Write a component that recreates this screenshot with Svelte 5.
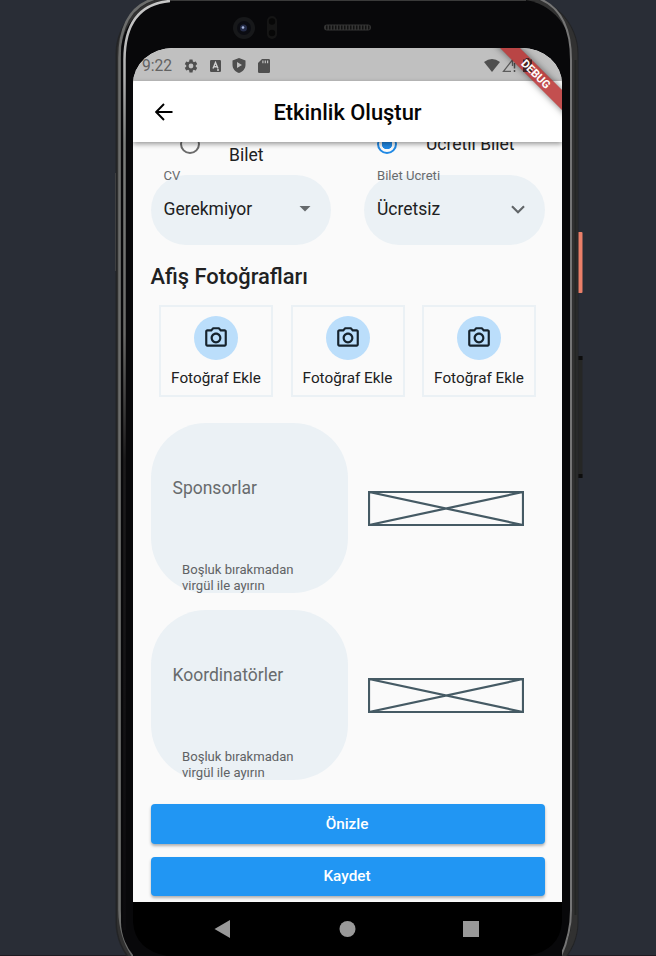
<script>
  const photos = [1, 2, 3];
  const groups = ['Sponsorlar', 'Koordinatörler'];
</script>

<div class="desktop">
  <svg class="device" width="656" height="956" viewBox="0 0 656 956" aria-hidden="true">
    <defs>
      <linearGradient id="sheen" gradientUnits="userSpaceOnUse" x1="0" y1="0" x2="0" y2="956">
        <stop offset="0" stop-color="#c8c8c8" />
        <stop offset="0.080" stop-color="#b0b0b0" />
        <stop offset="0.150" stop-color="#7c7e7c" />
        <stop offset="0.350" stop-color="#6a6a68" />
        <stop offset="0.480" stop-color="#1c1b1c" />
        <stop offset="1" stop-color="#0b0a0d" />
      </linearGradient>
    </defs>
    <rect x="0" y="955" width="656" height="1" fill="#1e1a21" />
    <rect x="577.500" y="232" width="5" height="61" rx="1" fill="#ea7f69" />
    <rect x="578" y="356" width="4.500" height="122" rx="1" fill="#262726" />
    <rect x="578" y="356" width="4.500" height="4" fill="#0d0d0d" />
    <rect x="578" y="474" width="4.500" height="4" fill="#0d0d0d" />
    <rect x="115" y="173" width="2" height="98" fill="#5a5b5c" />
    <rect x="115.500" y="-4" width="463" height="984" rx="58" fill="#232426" />
    <rect x="117" y="-3" width="460.500" height="982" rx="57" fill="#313131" />
    <path d="M162 -3Q119.500 4 119.500 58V910Q120 940 136 960" fill="none" stroke="#6c6d6c" stroke-width="2.500" />
    <rect x="121" y="-0.500" width="450" height="975" rx="53" fill="#08080a" />
    <path d="M170 1Q124.500 5 124.500 60V930" fill="none" stroke="url(#sheen)" stroke-width="2.500" />
    <path d="M170 0.500H526" stroke="#3a3a3a" stroke-width="1" />
    <path d="M540 -1Q571 12 571 60V910Q571 935 560 958" fill="none" stroke="#757575" stroke-width="2" />
    <path d="M575.500 60V915" stroke="#242625" stroke-width="2" />
    <circle cx="244" cy="28" r="11" fill="#17181a" />
    <circle cx="244" cy="28" r="7" fill="#0b0c12" />
    <circle cx="243.500" cy="28" r="3.500" fill="#252c48" />
    <circle cx="243" cy="27.500" r="1.300" fill="#a9b7de" />
    <rect x="267" y="16" width="10" height="23" rx="5" fill="#151515" />
    <circle cx="272" cy="21.500" r="3.200" fill="#070707" />
    <circle cx="272" cy="33" r="3.200" fill="#070707" />
    <path d="M327 27.500H368" stroke="#343434" stroke-width="6" stroke-linecap="round" />
    <path d="M326 27.500H370" stroke="#111" stroke-width="4" stroke-dasharray="1.500 1.500" />
  </svg>

  <main class="screen">
    <header class="status">
      <span class="clock">9:22</span>
      <svg class="s1" width="16" height="16" viewBox="0 0 24 24"><path fill="#4f4f4f" d="M19.140 12.940c.04-.3.060-.61.060-.94s-.02-.64-.07-.94l2.030-1.580a.49.490 0 0 0 .12-.61l-1.920-3.320a.49.490 0 0 0-.59-.22l-2.390.96a7 7 0 0 0-1.620-.94l-.36-2.540A.48.480 0 0 0 13.920 2.400h-3.840a.47.470 0 0 0-.47.410l-.36 2.540c-.59.240-1.130.57-1.620.94l-2.390-.96a.47.470 0 0 0-.59.220L2.740 8.870a.47.470 0 0 0 .12.610l2.030 1.580c-.05.300-.09.630-.09.940s.02.640.07.940l-2.030 1.580a.49.490 0 0 0-.12.610l1.920 3.320c.12.220.37.290.59.220l2.390-.96c.5.380 1.030.7 1.620.94l.36 2.540c.05.240.24.410.48.410h3.840c.24 0 .44-.17.470-.41l.36-2.540a7 7 0 0 0 1.620-.94l2.390.96c.22.080.47 0 .59-.22l1.920-3.320a.47.470 0 0 0-.12-.61zM12 15.600a3.600 3.600 0 1 1 0-7.200 3.600 3.600 0 0 1 0 7.200z" /></svg>
      <svg class="s2" width="11" height="12" viewBox="0 0 11 12"><rect width="11" height="12" rx="1.200" fill="#4f4f4f" /><path d="M3 8.500L5.500 2.500L8 8.500M4 6.700H7M7 10H9" fill="none" stroke="#d0d0d0" stroke-width="1.400" /></svg>
      <svg class="s3" width="14" height="15" viewBox="0 0 14 15"><path fill="#4f4f4f" fill-rule="evenodd" d="M7 0L13.500 2.500V7C13.500 10.700 10.700 13.800 7 15C3.300 13.800 0.500 10.700 0.500 7V2.500ZM5 4V10L10 7Z" /></svg>
      <svg class="s4" width="12" height="14" viewBox="0 0 12 14"><path fill="#4f4f4f" fill-rule="evenodd" d="M4 0H10.700Q12 0 12 1.300V12.700Q12 14 10.700 14H1.300Q0 14 0 12.700V4ZM4.300 1.500V4.300H5.500V1.500ZM6.700 1.500V4.300H7.900V1.500ZM9 1.500V4.300H10.200V1.500Z" /></svg>
      <span class="grow"></span>
      <svg class="s5" width="32" height="16" viewBox="0 0 32 16">
        <path fill="#4f4f4f" d="M0 4Q8 -2 16 4L8 14Z" />
        <path fill="none" stroke="#5c5c5c" stroke-width="1.300" d="M28.500 1.800L19.500 13.300H27M28.500 1.800V8" />
        <path stroke="#4f4f4f" stroke-width="1.500" d="M30.500 5V10.500M30.500 12V14" />
      </svg>
    </header>

    <div class="ribbon">
      <i class="band"></i>
      <svg class="battery" width="9" height="14" viewBox="0 0 9 14"><path fill="#2b1718" fill-opacity=".8" d="M0 1.500H2.700V0H6.300V1.500H9V14H0Z" /></svg>
      <span class="band label">DEBUG</span>
    </div>

    <div class="appbar">
      <svg width="18" height="18" viewBox="0 0 18 18"><path d="M17.500 9H1.500M9 1L1.200 9L9 17" fill="none" stroke="#000" stroke-width="1.900" /></svg>
      <h1>Etkinlik Oluştur</h1>
    </div>

    <section class="body">
      <div class="radios">
        <div class="option first"><i class="radio"></i><span>Bilet</span></div>
        <div class="option second"><i class="radio on"></i><span>Ücretli Bilet</span></div>
      </div>

      <div class="fields">
        <div class="field">
          <small>CV</small>
          <div><span>Gerekmiyor</span><svg width="12" height="6" viewBox="0 0 12 6"><path d="M0.500 0H11.500L6 5.500Z" fill="#666a6d" /></svg></div>
        </div>
        <div class="field">
          <small>Bilet Ucreti</small>
          <div><span>Ücretsiz</span><svg width="14" height="9" viewBox="0 0 14 9"><path d="M1 1.200L7 7.200L13 1.200" fill="none" stroke="#63676a" stroke-width="2.200" /></svg></div>
        </div>
      </div>

      <h2>Afiş Fotoğrafları</h2>

      <div class="photos">
        {#each photos as photo (photo)}
          <div class="photo">
            <div class="disc">
              <svg width="26" height="26" viewBox="0 0 24 24"><path fill="#16232d" d="M14.120 4l1.830 2H20v12H4V6h4.050l1.830-2h4.240M15 2H9L7.170 4H4c-1.100 0-2 .9-2 2v12c0 1.100.9 2 2 2h16c1.100 0 2-.9 2-2V6c0-1.100-.9-2-2-2h-3.170L15 2zm-3 7c1.650 0 3 1.350 3 3s-1.350 3-3 3-3-1.350-3-3 1.350-3 3-3m0-2c-2.760 0-5 2.240-5 5s2.240 5 5 5 5-2.240 5-5-2.240-5-5-5z" /></svg>
            </div>
            <span>Fotoğraf Ekle</span>
          </div>
        {/each}
      </div>

      {#each groups as group (group)}
        <div class="group">
          <div class="area">
            <span>{group}</span>
            <p>Boşluk bırakmadan<br />virgül ile ayırın</p>
          </div>
          <svg class="placeholder" width="156" height="35" viewBox="0 0 156 35"><path d="M1 1H155V34H1ZM1 1L155 34M1 34L155 1" fill="none" stroke="#455a64" stroke-width="2.200" /></svg>
        </div>
      {/each}

      <button>Önizle</button>
      <button>Kaydet</button>
    </section>

    <nav>
      <svg width="429" height="54" viewBox="0 0 429 54">
        <path d="M0 20Q2 48 34 54H0ZM429 20Q427 48 395 54H429Z" fill="#08080a" />
        <path d="M81.500 27L97 18V36Z" fill="#999" />
        <circle cx="214.500" cy="27" r="8" fill="#999" />
        <rect x="330" y="19" width="16" height="16" fill="#999" />
      </svg>
    </nav>
  </main>
</div>

<style>
  :global(body) { background: #292d36; }
  .desktop {
    position: relative; box-sizing: border-box; width: 656px; height: 956px; padding: 48px 94px 0 133px;
    overflow: hidden; background: #292d36; font-family: Roboto, "Liberation Sans", sans-serif; color: #202122;
  }
  .device { position: absolute; left: 0; top: 0; }
  .screen { position: relative; width: 429px; height: 908px; overflow: hidden; border-radius: 40px 40px 0 0 / 36px 36px 0 0; background: #fafafa; display: flex; flex-direction: column; }
  .status { box-sizing: border-box; height: 33px; flex: none; display: flex; align-items: center; padding: 2px 0 0 9px; background: #c0c0c0; }
  .clock { width: 41px; font-size: 15.600px; font-weight: 400; color: #626262; }
  .s2 { margin-left: 11px; }
  .s3 { margin-left: 11px; }
  .s4 { margin-left: 12px; }
  .grow { flex: 1; }
  .s5 { margin-right: 46px; }
  .ribbon { position: absolute; z-index: 3; right: 0; top: 0; width: 61px; height: 61px; }
  .band {
    position: absolute; left: -35px; top: 18.500px; width: 140px; height: 14px; transform: rotate(45deg);
    background: rgba(183, 45, 45, .84); box-shadow: 0 0 7px rgba(0, 0, 0, .5);
  }
  .battery { position: absolute; left: 22px; top: 10px; }
  .label { background: none; box-shadow: none; color: #fff; font-size: 11.200px; font-weight: 700; line-height: 15px; text-align: center; }
  .appbar { position: relative; z-index: 2; box-sizing: border-box; height: 61px; flex: none; display: flex; align-items: center; padding: 0 22px; background: #fff; box-shadow: 0 2px 5px rgba(0, 0, 0, .4); }
  h1 { flex: 1; margin: 2px 18px 0 0; font-size: 21.900px; font-weight: 500; line-height: 26px; text-align: center; color: #050505; }
  .body { height: 760px; flex: none; box-sizing: border-box; padding: 0 17.500px; display: flex; flex-direction: column; background: #fafafa; }
  .radios { display: flex; height: 33px; flex: none; font-size: 17.500px; line-height: 20px; }
  .option { display: flex; align-items: flex-start; width: 197px; }
  .first { padding-left: 29px; }
  .second { width: auto; }
  .radio { box-sizing: border-box; width: 20px; height: 20px; flex: none; margin-top: -8px; border: 2px solid #6b6b6b; border-radius: 50%; }
  .radio.on { border-color: #2189e4; background: radial-gradient(circle, #2189e4 0 5px, transparent 5.500px); }
  .first span { margin: 3px 0 0 29.500px; }
  .second span { margin: -8px 0 0 29.500px; }
  .fields { display: flex; justify-content: space-between; flex: none; }
  .field { box-sizing: border-box; width: 180.500px; height: 70px; padding: 0 20px 0 13px; border-radius: 35px; background: #ebf1f5; }
  .field small { display: block; height: 14px; margin-top: -6px; font-size: 13.100px; line-height: 14px; color: #686b6d; }
  .field div { display: flex; align-items: center; justify-content: space-between; height: 52px; font-size: 17.500px; }
  h2 { margin: 19px 0 0; height: 26px; flex: none; font-size: 21.900px; font-weight: 500; line-height: 26px; }
  .photos { display: flex; justify-content: space-between; flex: none; margin: 15px 8.500px 0; }
  .photo { box-sizing: border-box; width: 114px; height: 92px; padding-top: 9px; border: 2px solid #ebf1f5; display: flex; flex-direction: column; align-items: center; font-size: 15.300px; line-height: 18px; white-space: nowrap; }
  .disc { width: 44px; height: 44px; flex: none; margin-bottom: 9px; border-radius: 50%; background: #bbdefb; display: flex; align-items: center; justify-content: center; }
  .group { display: flex; align-items: center; flex: none; height: 170px; margin-top: 17px; }
  .photos + .group { margin-top: 26px; }
  .area { box-sizing: border-box; width: 197px; height: 170px; padding: 55px 0 0 22px; border-radius: 55px; background: #ebf1f5; color: #686b6d; font-size: 17.500px; line-height: 20px; }
  .area p { margin: 64px 0 0 9.500px; font-size: 13.100px; line-height: 16px; color: #5f6264; }
  .placeholder { margin-left: 20.500px; }
  button { height: 39.500px; flex: none; margin: 13px 0 0; padding: 0 1px 0 0; border: 0; border-radius: 4px; background: #2196f3; box-shadow: 0 2px 3px rgba(0, 0, 0, .3); color: #fff; font: 500 15.300px Roboto, "Liberation Sans", sans-serif; }
  .group + button { margin-top: 24px; }
  nav { box-sizing: border-box; height: 54px; flex: none; background: #000; }
</style>
